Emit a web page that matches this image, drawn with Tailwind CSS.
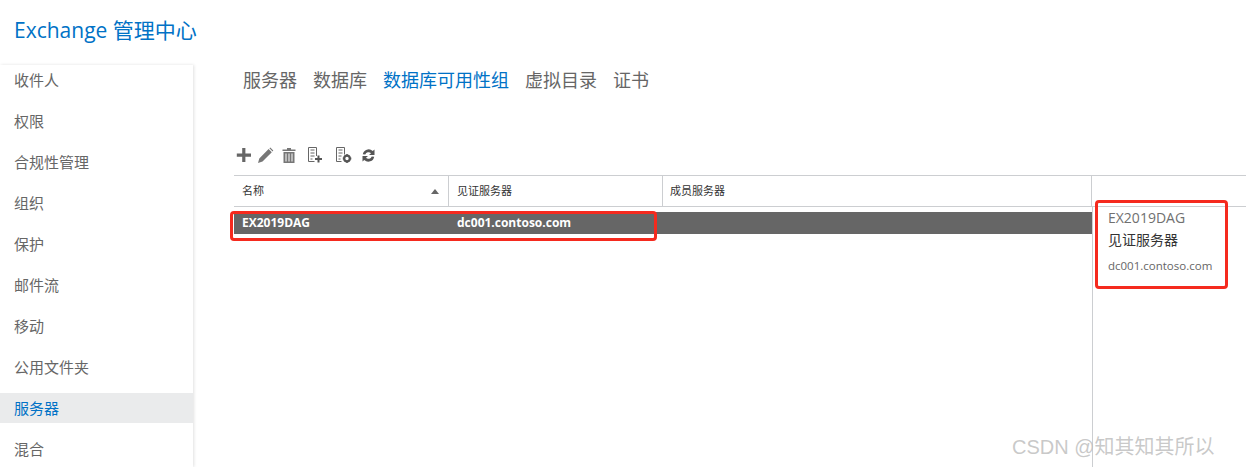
<!DOCTYPE html>
<html lang="zh">
<head>
<meta charset="utf-8">
<script src="https://cdn.jsdelivr.net/npm/@tailwindcss/browser@4"></script>
</head>
<body class="bg-white overflow-hidden">
<div class="relative w-[1246px] h-[467px] overflow-hidden flex flex-col font-['Open_Sans','Noto_Sans_CJK_SC',sans-serif]">
  <header class="h-[65px] shrink-0 pl-[14px] pt-[13px] text-[21px] leading-[34px] text-[#0072c6]">Exchange 管理中心</header>
  <div class="flex flex-1 min-h-0">
    <nav class="w-[193px] shrink-0 flex flex-col gap-[11px] text-[15px] leading-[30px] text-[#666] shadow-[1px_0_3px_rgba(0,0,0,0.12)]">
      <div class="h-[30px] pl-[14px]">收件人</div>
      <div class="h-[30px] pl-[14px]">权限</div>
      <div class="h-[30px] pl-[14px]">合规性管理</div>
      <div class="h-[30px] pl-[14px]">组织</div>
      <div class="h-[30px] pl-[14px]">保护</div>
      <div class="h-[30px] pl-[14px]">邮件流</div>
      <div class="h-[30px] pl-[14px]">移动</div>
      <div class="h-[30px] pl-[14px]">公用文件夹</div>
      <div class="h-[30px] pl-[14px] bg-[#eaebec] text-[#0072c6]">服务器</div>
      <div class="h-[30px] pl-[14px]">混合</div>
    </nav>
    <main class="flex-1 min-w-0 pl-[41px] flex flex-col">
      <div class="flex gap-4 pl-[9px] text-[18px] leading-[30px] text-[#666]">
        <span>服务器</span><span>数据库</span><span class="text-[#0072c6]">数据库可用性组</span><span>虚拟目录</span><span>证书</span>
      </div>
      <div class="mt-[48px] h-[24px] flex items-center pl-[2px] gap-[3px] text-[#666]">
        <svg class="w-[16px] h-[16px]" viewBox="0 0 16 16"><path d="M6.2 1h3.2v5.6H15v3.2H9.4V15H6.2V9.8H.8V6.6h5.4z" fill="#666"/></svg>
        <svg class="w-[17px] h-[17px] ml-[2px]" viewBox="0 0 17 17"><path d="M1 16l1.3-4.6L11.6 2l3.2 3.2-9.3 9.4zM12.4 1.3l.9-.7 3 3-.7 1z" fill="#777"/></svg>
        <svg class="w-[14px] h-[15px] ml-[5px]" viewBox="0 0 14 15"><path d="M5 0h4v1.5h4.500v1.500H.5V1.500H5zM1.500 4h11v11h-11zM3.500 5.500v8h1v-8zM6.500 5.500v8h1v-8zM9.500 5.500v8h1v-8z" fill="#777" fill-rule="evenodd"/></svg>
        <svg class="w-[16px] h-[16px] ml-[8px]" viewBox="0 0 16 16"><path d="M1.500.5h8v8.500M1.500.5v14h6M3.500 3h4M3.500 6h4M3.500 9h4M3.500 12h2" fill="none" stroke="#666"/><path d="M10.500 8.500h2v2.500H15v2h-2.500v2.500h-2V13H8v-2h2.500z" fill="#555"/></svg>
        <svg class="w-[17px] h-[16px] ml-[9px]" viewBox="0 0 17 16"><path d="M1.500.5h8v7M1.500.5v14h5M3.500 3h4M3.500 6h4M3.500 9h3M3.500 12h2" fill="none" stroke="#666"/><circle cx="12" cy="11.500" r="2.800" fill="none" stroke="#555" stroke-width="2.200"/><path d="M11 7.300h2v1.500h-2zM11 14.300h2v1.500h-2zM7.800 10.500h1.500v2H7.800zM14.800 10.500h1.500v2h-1.500z" fill="#555"/></svg>
        <svg class="w-[15px] h-[15px] ml-[6px]" viewBox="0 0 15 15"><path d="M1.800 6.300A5.900 5.900 0 0 1 11.700 3L13.500 1.500V7H8l2-1.800A3.400 3.400 0 0 0 4.300 6.600zM13.200 8.700A5.900 5.900 0 0 1 3.300 12L1.500 13.500V8H7L5 9.800a3.400 3.400 0 0 0 5.700-1.400z" fill="#555"/></svg>
      </div>
      <div class="mt-[8px] flex-1 flex flex-col min-h-0">
        <div class="h-[32px] flex border-y border-[#ccced1] text-[11px] leading-[30px] text-[#333]">
          <div class="w-[215px] pl-[8px] pr-[9px] flex justify-between items-center border-r border-[#ccced1]"><span>名称</span><svg class="w-[8px] h-[5px]" viewBox="0 0 8 5"><path d="M4 0l4 5H0z" fill="#666"/></svg></div>
          <div class="w-[214px] pl-[8px] border-r border-[#ccced1]">见证服务器</div>
          <div class="w-[429px] pl-[7px] border-r border-[#ccced1]">成员服务器</div>
          <div class="flex-1"></div>
        </div>
        <div class="flex flex-1 min-h-0">
          <div class="w-[858px] shrink-0 pt-[5px]">
            <div class="h-[22px] bg-[#666] text-white font-bold text-[12px] leading-[22px] flex">
              <div class="w-[215px] pl-[8px]">EX2019DAG</div>
              <div class="pl-[8px]">dc001.contoso.com</div>
            </div>
          </div>
          <aside class="flex-1 border-l border-[#ccced1] pl-[15px] pt-[2px]">
            <div class="text-[14px] leading-[18px] text-[#707070]">EX2019DAG</div>
            <div class="mt-[3px] text-[14px] leading-[20px] text-[#333]">见证服务器</div>
            <div class="mt-[6px] text-[11.500px] leading-[20px] text-[#666]">dc001.contoso.com</div>
          </aside>
        </div>
      </div>
    </main>
  </div>
  <div class="absolute left-[230px] top-[211px] w-[427px] h-[30px] border-[3px] border-[#f52a1e] rounded-[4px]"></div>
  <div class="absolute left-[1095px] top-[200px] w-[133px] h-[89px] border-[3px] border-[#f52a1e] rounded-[4px]"></div>
  <div class="absolute left-[1012px] top-[434px] text-[20px] leading-[26px] text-[#bbb]/80 font-['Liberation_Sans','Noto_Sans_CJK_SC',sans-serif]">CSDN @知其知其所以</div>
</div>
</body>
</html>
